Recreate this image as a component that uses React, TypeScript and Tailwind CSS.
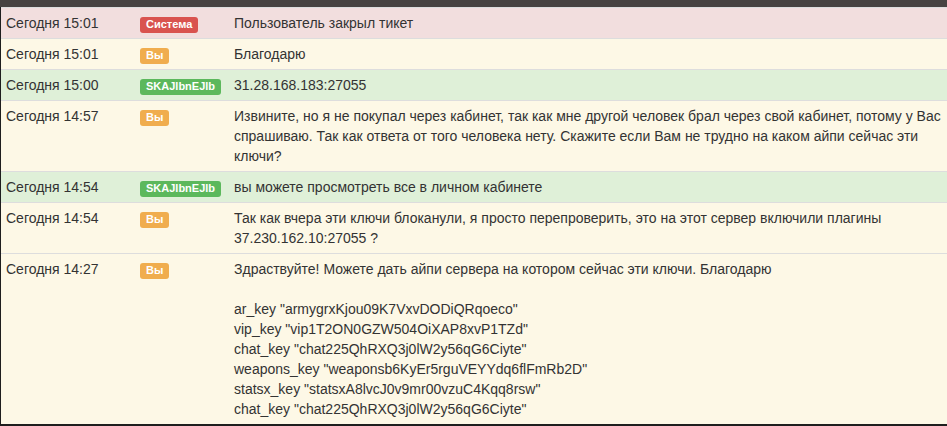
import React from "react";

type Row = {
  time: string;
  who: "sys" | "me" | "adm";
  lines: React.ReactNode;
};

const rows: Row[] = [
  { time: "Сегодня 15:01", who: "sys", lines: "Пользователь закрыл тикет" },
  { time: "Сегодня 15:01", who: "me", lines: "Благодарю" },
  { time: "Сегодня 15:00", who: "adm", lines: "31.28.168.183:27055" },
  {
    time: "Сегодня 14:57",
    who: "me",
    lines:
      "Извините, но я не покупал через кабинет, так как мне другой человек брал через свой кабинет, потому у Вас спрашиваю. Так как ответа от того человека нету. Скажите если Вам не трудно на каком айпи сейчас эти ключи?",
  },
  { time: "Сегодня 14:54", who: "adm", lines: "вы можете просмотреть все в личном кабинете" },
  {
    time: "Сегодня 14:54",
    who: "me",
    lines: (
      <>
        Так как вчера эти ключи блоканули, я просто перепроверить, это на этот сервер включили плагины
        <br />
        37.230.162.10:27055 ?
      </>
    ),
  },
  {
    time: "Сегодня 14:27",
    who: "me",
    lines: (
      <>
        Здраствуйте! Можете дать айпи сервера на котором сейчас эти ключи. Благодарю
        <br />
        <br />
        ar_key "armygrxKjou09K7VxvDODiQRqoeco"
        <br />
        vip_key "vip1T2ON0GZW504OiXAP8xvP1TZd"
        <br />
        chat_key "chat225QhRXQ3j0lW2y56qG6Ciyte"
        <br />
        weapons_key "weaponsb6KyEr5rguVEYYdq6flFmRb2D"
        <br />
        statsx_key "statsxA8lvcJ0v9mr00vzuC4Kqq8rsw"
        <br />
        chat_key "chat225QhRXQ3j0lW2y56qG6Ciyte"
      </>
    ),
  },
];

function Badge({ who }: { who: Row["who"] }) {
  if (who === "sys")
    return (
      <span className="inline-block rounded-[3px] bg-[#d9534f] px-[6px] pt-[2px] pb-[3px] text-[11px] font-bold leading-[11px] text-white align-baseline">
        Система
      </span>
    );
  if (who === "me")
    return (
      <span className="inline-block rounded-[3px] bg-[#f0ad4e] px-[6px] pt-[2px] pb-[3px] text-[11px] font-bold leading-[11px] text-white align-baseline">
        Вы
      </span>
    );
  return (
    <span className="inline-block rounded-[3px] bg-[#5cb85c] px-[6px] pt-[2px] pb-[3px] text-[11px] font-bold leading-[11px] text-white align-baseline">
      SKAJlbnEJlb
    </span>
  );
}

export default function App() {
  return (
    <div
      className="h-[426px] w-[947px] overflow-hidden bg-[#fdf8e6] text-[14px] leading-[20px] text-[#333]"
      style={{ fontFamily: '"Liberation Sans", Arial, sans-serif' }}
    >
      <div className="h-[7px] bg-[#474241]" />
      <div className="h-[417px] overflow-hidden border-l border-[#1e1e1e]">
        <table className="w-full border-collapse">
          <tbody>
            {rows.map((r, i) => {
              const bg =
                r.who === "sys" ? "bg-[#f2dede]" : r.who === "adm" ? "bg-[#dff0d8]" : "bg-[#fdf8e6]";
              return (
                <tr key={i} className={bg}>
                  <td className="w-[134px] border-t border-[#dddddd] p-[5px] align-top">{r.time}</td>
                  <td className="w-[94px] border-t border-[#dddddd] p-[5px] align-top">
                    <Badge who={r.who} />
                  </td>
                  <td className="border-t border-[#dddddd] p-[5px] align-top">{r.lines}</td>
                </tr>
              );
            })}
          </tbody>
        </table>
      </div>
      <div className="h-[2px] bg-[#1e1e1e]" />
    </div>
  );
}
